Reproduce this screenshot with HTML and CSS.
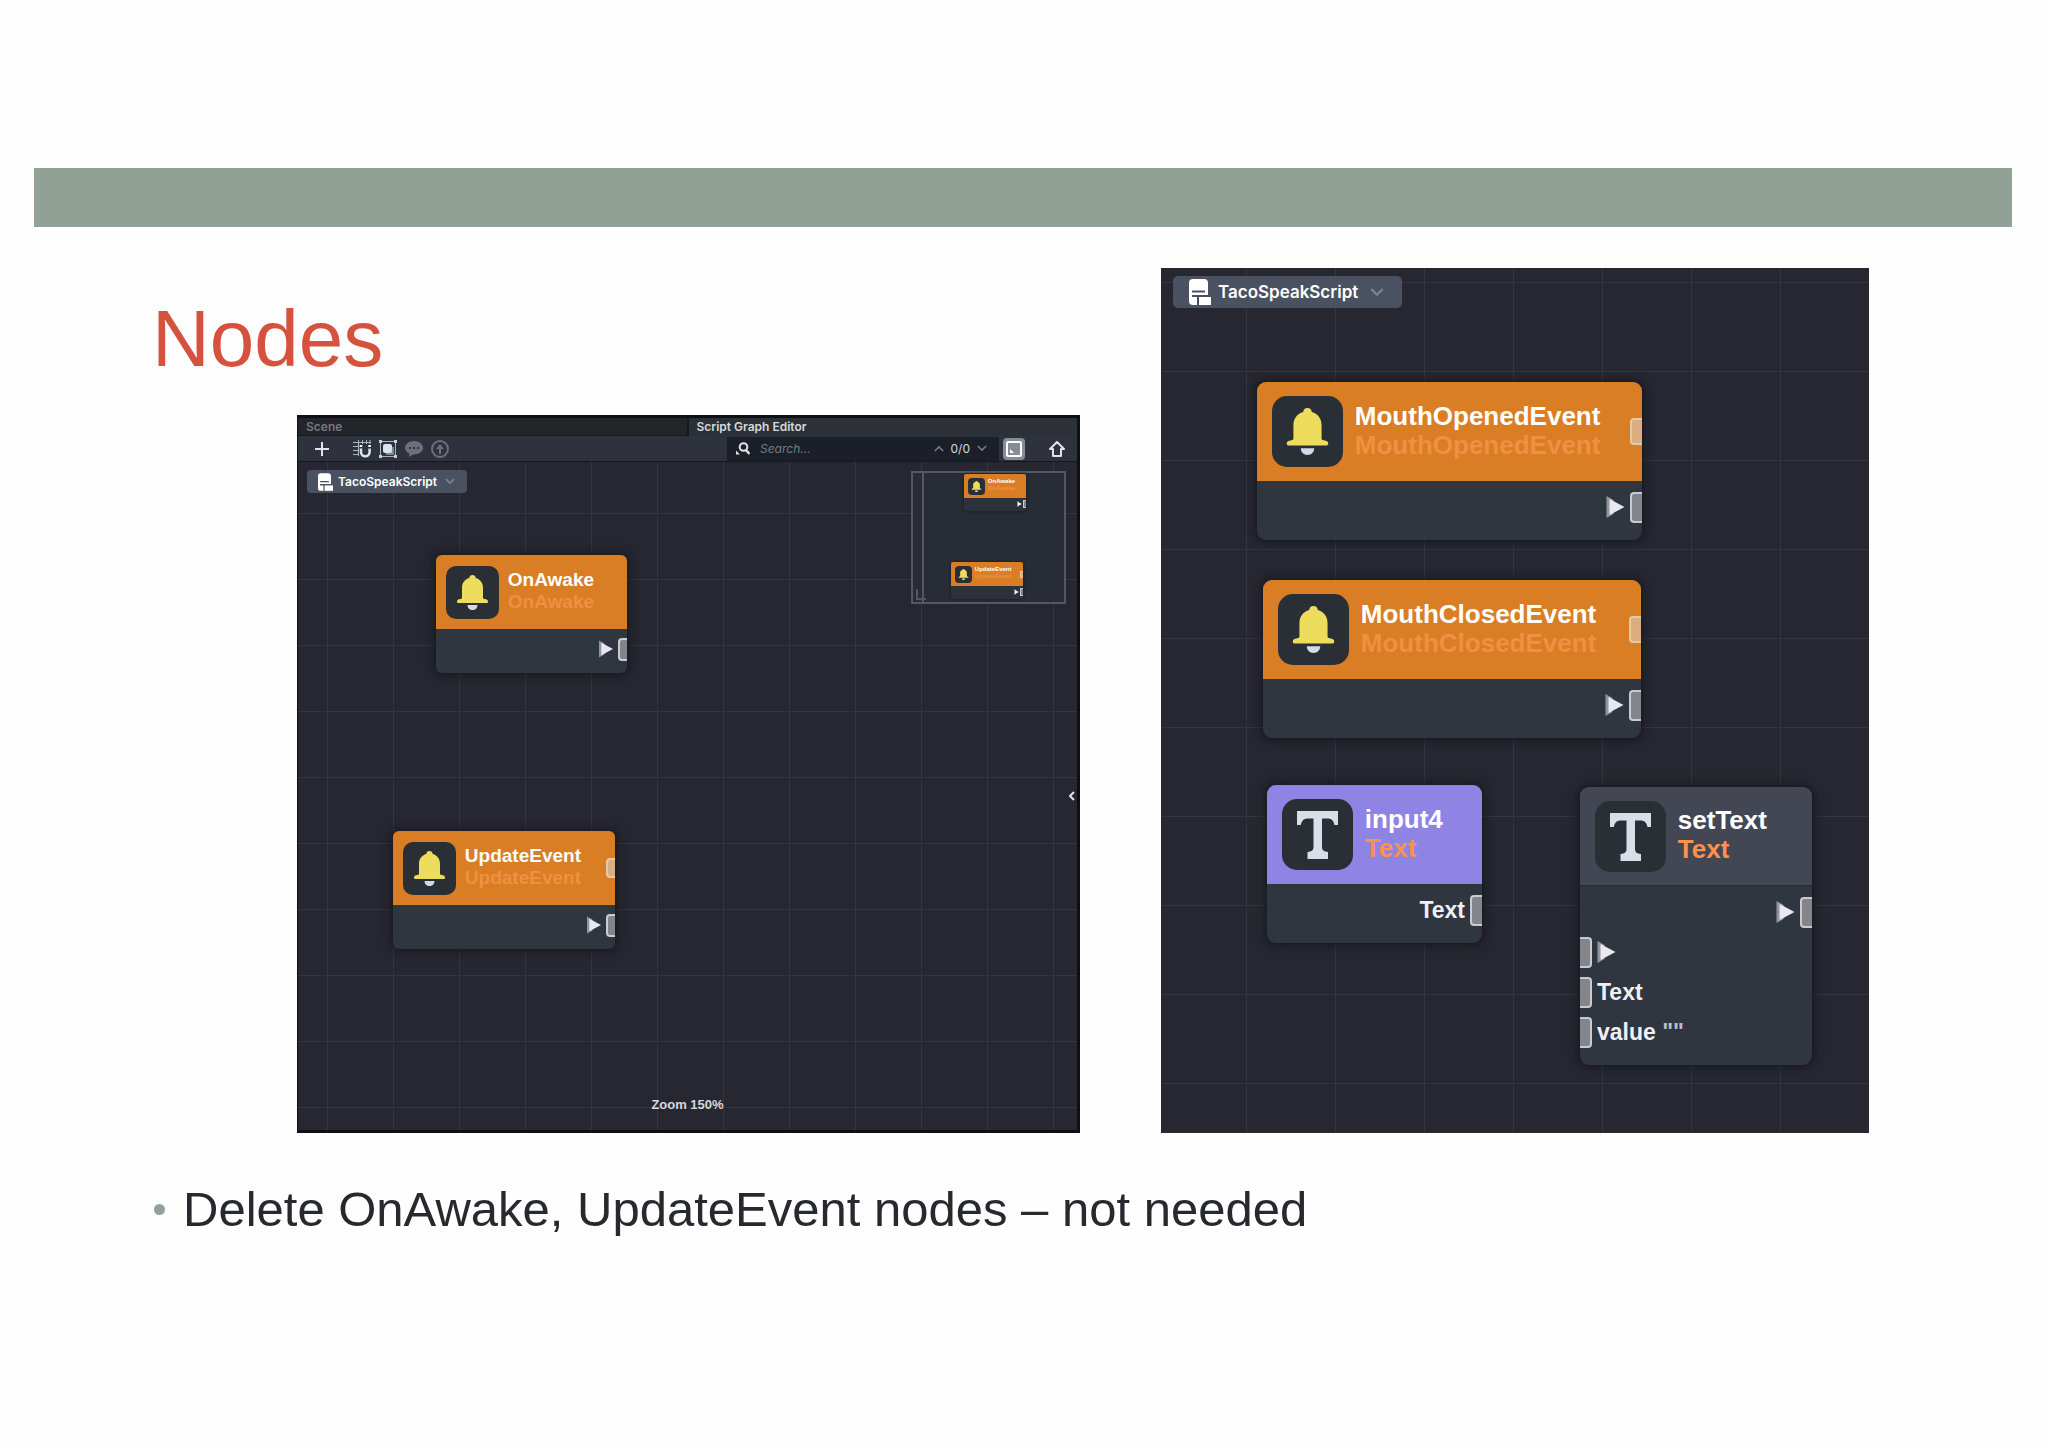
FILE: index.html
```html
<!DOCTYPE html>
<html lang="en">
<head>
<meta charset="utf-8">
<title>Nodes</title>
<link rel="stylesheet" href="styles.css">
</head>
<body>
<svg class="defs" aria-hidden="true">
  <symbol id="bell" viewBox="0 0 53 53">
    <path fill="#eedc5c" d="M26.500 9c2 0 3 1.200 3.200 2.900C34.500 13.200 37 17 37 22v9.500c0 1 .4 1.400 1.600 1.500 2.200.2 3.400 1.200 3.400 2.400 0 .9-.6 1.600-1.600 1.600H12.600c-1 0-1.600-.7-1.600-1.600 0-1.200 1.200-2.200 3.400-2.400 1.200-.1 1.600-.5 1.600-1.500V22c0-5 2.500-8.800 7.300-10.100C23.500 10.200 24.500 9 26.500 9z"/>
    <path fill="#cfdbe6" d="M21.500 39h10c0 3-2.200 5-5 5s-5-2-5-5z"/>
  </symbol>
  <symbol id="tee" viewBox="0 0 71 71">
    <path fill="#d9dfe8" d="M15 12h41v14h-3.500c-1-4.500-3-6.500-7-6.500H40V48c0 3 1.500 4.500 6 5v7H25.500v-7c4.500-.5 6-2 6-5V19.500H26c-4.200 0-6.200 2-7.200 6.500H15z"/>
  </symbol>
  <symbol id="play" viewBox="0 0 18 22">
    <path fill="#92959c" d="M0 0l7 4v14l-7 4z"/><path fill="#e8e8ee" d="M3 3l15 8-15 8z"/>
  </symbol>
  <symbol id="script" viewBox="0 0 22 26">
    <path fill="#fff" d="M4 0h11a4 4 0 0 1 4 4v13h-9v9H4a4 4 0 0 1-4-4V4a4 4 0 0 1 4-4z"/>
    <path stroke="#4a5262" stroke-width="2" d="M3 12.500h13M3 17h17M9 17v9"/>
    <path fill="#fff" d="M10 18h12v8H10z"/>
  </symbol>
  <symbol id="down" viewBox="0 0 12 8"><path fill="none" stroke="currentColor" stroke-width="2" d="M1 1l5 5 5-5"/></symbol>
  <symbol id="up" viewBox="0 0 12 8"><path fill="none" stroke="currentColor" stroke-width="2" d="M1 7l5-5 5 5"/></symbol>
</svg>

<div class="band"></div>
<main class="slide">
  <section class="left">
    <h1>Nodes</h1>
    <div class="editor">
      <div class="tabs">
        <button class="tab">Scene</button>
        <button class="tab tab-active">Script Graph Editor</button>
      </div>
      <div class="toolbar">
        <button class="tool tool-add" aria-label="Add"><svg width="14" height="14" viewBox="0 0 14 14"><path stroke="#e3e5ea" stroke-width="2" d="M7 0v14M0 7h14"/></svg></button>
        <button class="tool" aria-label="Snap"><svg width="18" height="18" viewBox="0 0 18 18"><path fill="none" stroke="#aeb6c1" d="M5.500 0v16M9.500 0v4M13.500 0v4M17 0v4M0 2.500h18M0 6.500h5M0 10.500h5M0 14.500h5"/><path fill="none" stroke="#dfe5ec" stroke-width="2.500" d="M8 8.500v3.500a4.300 4.300 0 0 0 8.600 0V8.500"/><path stroke="#fff" stroke-width="2" d="M6.700 6h2.600M15.300 6h2.600"/></svg></button>
        <button class="tool" aria-label="Frame selection"><svg width="18" height="18" viewBox="0 0 18 18"><rect x="1.500" y="1.500" width="15" height="15" fill="none" stroke="#a9b2be"/><path fill="#7d8794" d="M7 7h8v8H7z"/><rect x="4" y="4" width="9" height="9" rx="2" fill="#dbe3ec"/><path fill="#c7d0da" d="M0 0h3v3H0zM15 0h3v3h-3zM0 15h3v3H0zM15 15h3v3h-3z"/></svg></button>
        <button class="tool" aria-label="Comment"><svg width="18" height="16" viewBox="0 0 18 16"><path fill="#6b7079" d="M9 0c5 0 9 3 9 6.800s-4 6.700-9 6.700H8L4 16l.3-3.500C1.700 11.300 0 9.300 0 6.800 0 3 4 0 9 0z"/><path fill="#2f343e" d="M4 6h2v2H4zM8 6h2v2H8zM12 6h2v2h-2z"/></svg></button>
        <button class="tool" aria-label="Upload"><svg width="18" height="18" viewBox="0 0 18 18"><circle cx="9" cy="9" r="8" fill="none" stroke="#6b7079" stroke-width="2"/><path fill="#6b7079" d="M9 4l4 5h-3v5H8V9H5z"/></svg></button>
        <div class="search">
          <svg width="14" height="13" viewBox="0 0 14 13"><circle cx="7.500" cy="5" r="3.800" fill="none" stroke="#dfe2e8" stroke-width="2"/><path stroke="#dfe2e8" stroke-width="2.500" d="M10 8l3.500 4"/><path fill="#dfe2e8" d="M0 8.500L4 12.500H0z"/></svg>
          <input type="text" placeholder="Search..." aria-label="Search">
          <button class="step" aria-label="Previous"><svg width="10" height="7"><use href="#up"/></svg></button>
          <span class="count">0/0</span>
          <button class="step" aria-label="Next"><svg width="10" height="7"><use href="#down"/></svg></button>
        </div>
        <button class="map-toggle" aria-label="Toggle minimap"><svg width="16" height="16" viewBox="0 0 16 16"><rect x="1" y="1" width="14" height="14" rx="1" fill="#878d97" stroke="#fff" stroke-width="2"/><path fill="#fff" d="M4 8l4 4H4z"/></svg></button>
        <button class="tool home" aria-label="Home"><svg width="16" height="16" viewBox="0 0 16 16"><path fill="none" stroke="#dfe2e8" stroke-width="2" stroke-linejoin="round" d="M1 8l7-7 7 7h-3v7H4V8z"/></svg></button>
      </div>
      <div class="canvas canvas-small">
        <button class="chip"><svg class="chip-icon"><use href="#script"/></svg>TacoSpeakScript<svg class="chip-arrow"><use href="#down"/></svg></button>
        <article class="node event on-awake">
          <header><span class="tile"><svg><use href="#bell"/></svg></span><div><h2>OnAwake</h2><p>OnAwake</p></div></header>
          <div class="row out"><svg class="play"><use href="#play"/></svg><i class="port"></i></div>
        </article>
        <article class="node event update">
          <header><span class="tile"><svg><use href="#bell"/></svg></span><div><h2>UpdateEvent</h2><p>UpdateEvent</p></div><i class="port port-head"></i></header>
          <div class="row out"><svg class="play"><use href="#play"/></svg><i class="port"></i></div>
        </article>
        <div class="minimap">
          <article class="node event mini-awake">
            <header><span class="tile"><svg><use href="#bell"/></svg></span><div><h2>OnAwake</h2><p>OnAwake</p></div></header>
            <div class="row out"><svg class="play"><use href="#play"/></svg><i class="port"></i></div>
          </article>
          <article class="node event mini-update">
            <header><span class="tile"><svg><use href="#bell"/></svg></span><div><h2>UpdateEvent</h2><p>UpdateEvent</p></div><i class="port port-head"></i></header>
            <div class="row out"><svg class="play"><use href="#play"/></svg><i class="port"></i></div>
          </article>
        </div>
        <button class="drawer" aria-label="Open side panel"><svg width="6" height="10" viewBox="0 0 6 10"><path fill="none" stroke="#e3e5ea" stroke-width="2" d="M5 1L1 5l4 4"/></svg></button>
        <p class="zoom">Zoom 150%</p>
      </div>
    </div>
  </section>

  <section class="canvas canvas-large">
    <button class="chip"><svg class="chip-icon"><use href="#script"/></svg>TacoSpeakScript<svg class="chip-arrow"><use href="#down"/></svg></button>
    <article class="node event opened">
      <header><span class="tile"><svg><use href="#bell"/></svg></span><div><h2>MouthOpenedEvent</h2><p>MouthOpenedEvent</p></div><i class="port port-head"></i></header>
      <div class="row out"><svg class="play"><use href="#play"/></svg><i class="port"></i></div>
    </article>
    <article class="node event closed">
      <header><span class="tile"><svg><use href="#bell"/></svg></span><div><h2>MouthClosedEvent</h2><p>MouthClosedEvent</p></div><i class="port port-head"></i></header>
      <div class="row out"><svg class="play"><use href="#play"/></svg><i class="port"></i></div>
    </article>
    <article class="node variable input">
      <header><span class="tile"><svg><use href="#tee"/></svg></span><div><h2>input4</h2><p>Text</p></div></header>
      <div class="row out"><span>Text</span><i class="port"></i></div>
    </article>
    <article class="node action set-text">
      <header><span class="tile"><svg><use href="#tee"/></svg></span><div><h2>setText</h2><p>Text</p></div></header>
      <div class="row out"><svg class="play"><use href="#play"/></svg><i class="port"></i></div>
      <div class="row in"><i class="port"></i><svg class="play"><use href="#play"/></svg></div>
      <div class="row in"><i class="port"></i><span>Text</span></div>
      <div class="row in"><i class="port"></i><span>value <b>""</b></span></div>
    </article>
  </section>
</main>
<ul class="notes">
  <li>Delete OnAwake, UpdateEvent nodes – not needed</li>
</ul>
</body>
</html>
```
FILE: styles.css
```css
* { box-sizing: border-box; }

body {
  margin: 0;
  padding: 168px 36px 0 34px;
  background: #fefefe;
  font-family: "Liberation Sans", Arial, sans-serif;
}

h1, h2, p, ul { margin: 0; }
button { border: 0; padding: 0; background: none; font: inherit; color: inherit; }
svg { display: block; }
.defs { display: none; }

.band { height: 59px; background: #92a196; }

.slide {
  display: grid;
  grid-template-columns: minmax(0, 928fr) minmax(0, 708fr);
  gap: 81px;
  padding: 41px 143px 0 118px;
}

.left { display: flex; flex-direction: column; }
h1 { font-size: 80px; line-height: 92px; font-weight: 400; color: #d5533e; margin: 25px 0 30px; }

/* Editor window */
.editor {
  flex: 1;
  display: flex;
  flex-direction: column;
  margin-left: 145px;
  border: solid #0e1014;
  border-width: 3px 3px 3px 1px;
  background: #2e323d;
  font-family: Inter, sans-serif;
}

.tabs { display: flex; height: 18px; background: #2c3137; font-size: 12px; line-height: 18px; font-weight: 600; }
.tab { flex: 1; padding-left: 8px; text-align: left; color: #757a80; background: #22252a; border: solid #15181d; border-width: 0 2px 1px 0; }
.tab-active { color: #d5d8dd; background: none; border: 0; }

.toolbar { display: flex; align-items: center; gap: 4px; height: 26px; padding: 0 8px 0 17px; border-bottom: 1px solid #15181d; }
.tool { margin-right: 4px; }
.tool-add { margin-right: 20px; }
.home { margin-left: 20px; }
.search { display: flex; align-items: center; width: 272px; height: 24px; margin-left: auto; padding: 0 12px 0 9px; background: #1b1f27; color: #d5d8dd; }
.search input { flex: 1; min-width: 0; margin-left: 10px; padding: 0; border: 0; background: none; outline: 0; font: italic 12px/16px Inter, sans-serif; }
.search input::placeholder { color: #777b83; }
.count { margin: 0 7px; font-size: 12px; }
.step { color: #777b83; }
.map-toggle { padding: 3px; border-radius: 4px; background: #878d97; }

/* Graph canvas */
.canvas {
  position: relative;
  background-color: #272731;
  background-image: linear-gradient(90deg, #33363f 1px, transparent 1px), linear-gradient(#33363f 1px, transparent 1px);
}
.canvas-small {
  flex: 1;
  --text: 19px; --line: 22px; --tile: 53px; --tile-radius: 10px; --pad: 10px; --header: 74px; --node: 118px; --radius: 6px;
  --port-w: 9px; --port-h: 23px; --port-head: 20px; --port-line: 2px; --row: 40px; --row-top: 0px; --play: 18px; --play-w: 14px;
  background-size: 66px 66px;
  background-position: 29px 51px;
}
.canvas-large {
  min-height: 865px;
  --text: 26px; --line: 29px; --tile: 71px; --tile-radius: 15px; --pad: 15px; --header: 99px; --node: 158px; --radius: 9px;
  --port-w: 12px; --port-h: 31px; --port-head: 27px; --port-line: 2px; --row: 40px; --row-top: 6px; --play: 22px; --play-w: 19px;
  background-size: 89px 89px;
  background-position: 85px 14px;
}

.chip {
  display: flex;
  align-items: center;
  width: fit-content;
  background: #4a5262;
  color: #fff;
  font-family: Inter, sans-serif;
  font-weight: 600;
}
.chip-arrow { color: #7d8491; }
.canvas-small .chip { height: 23px; margin: 8px 9px; padding: 0 12px 0 11px; border-radius: 4px; font-size: 12px; }
.canvas-small .chip-icon { width: 15px; height: 18px; margin-right: 5px; }
.canvas-small .chip-arrow { width: 10px; height: 7px; margin-left: 8px; }
.canvas-large .chip { height: 32px; margin: 8px 12px; padding: 0 18px 0 16px; border-radius: 5px; font-size: 17px; }
.canvas-large .chip-icon { width: 22px; height: 26px; margin-right: 7px; }
.canvas-large .chip-arrow { width: 14px; height: 9px; margin-left: 12px; }

/* Nodes */
.node {
  position: absolute;
  min-height: var(--node);
  border-radius: var(--radius);
  overflow: hidden;
  background: #2f363f;
  box-shadow: 0 0 10px 2px #16181f;
  font-family: "Liberation Sans", Arial, sans-serif;
}
.node header { position: relative; display: flex; align-items: center; gap: calc(var(--tile) / 6); height: var(--header); padding-left: var(--pad); }
.node h2, .node p { font-size: var(--text); line-height: var(--line); font-weight: 700; color: #fff; white-space: nowrap; }
.node header div { padding-bottom: 2px; }
.node header p { color: #f9924f; }
.event header { background: #d97e24; }
.event header p { color: #f18f42; }
.variable header { background: #8f83e3; }
.action header { background: #434754; border-bottom: 1px solid #282c35; }
.tile { width: var(--tile); height: var(--tile); border-radius: var(--tile-radius); background: #2a2f36; }
.tile svg { width: 100%; height: 100%; }
.row { display: flex; align-items: center; gap: 5px; height: var(--row); font-size: 23px; font-weight: 700; color: #eef0f5; }
.row b { color: #b9bcc4; }
.out { justify-content: flex-end; margin-top: var(--row-top); }
.play { width: var(--play-w); height: var(--play); }
.port { width: var(--port-w); height: var(--port-h); border: var(--port-line) solid #c9cbd1; border-right: 0; border-radius: 4px 0 0 4px; background: #83858b; }
.in .port { border-right: var(--port-line) solid #c9cbd1; border-left: 0; border-radius: 0 4px 4px 0; }
.port-head { height: var(--port-head); margin-left: auto; background: #dcae7f; border-color: #e5c8a8; }

.on-awake { left: 138px; top: 93px; width: 191px; }
.update { left: 95px; top: 369px; width: 222px; }
.opened { left: 96px; top: 114px; width: 385px; }
.closed { left: 102px; top: 312px; width: 378px; }
.input { left: 106px; top: 517px; width: 215px; }
.set-text { left: 419px; top: 519px; width: 232px; min-height: 278px; }

/* Minimap */
.minimap {
  position: absolute;
  top: 9px;
  right: 11px;
  width: 155px;
  height: 133px;
  border: 2px solid #555862;
  background: linear-gradient(#555862, #555862) 9px 0 / 2px 100% no-repeat #282c35;
  --text: 6px; --line: 7px; --tile: 17px; --tile-radius: 4px; --pad: 4px; --header: 24px; --node: 37px; --radius: 2px;
  --port-w: 3px; --port-h: 8px; --port-head: 7px; --port-line: 1px; --row: 12px; --play: 6px; --play-w: 5px;
}
.minimap::after { content: ""; position: absolute; left: 3px; bottom: 2px; width: 8px; height: 9px; border: solid #555862; border-width: 0 0 2px 2px; }
.minimap .node { box-shadow: 0 0 3px #16181f; background: #2d313a; }
.minimap .row { gap: 1px; }
.minimap .port { border-radius: 1px 0 0 1px; }
.mini-awake { left: 51px; top: 1px; width: 62px; }
.mini-update { left: 38px; top: 89px; width: 72px; }

.drawer { position: absolute; right: 1px; top: 328px; padding: 1px; }
.zoom { position: absolute; left: 0; right: 0; bottom: 17px; text-align: center; font: 700 13px/16px "Liberation Sans", Arial, sans-serif; color: #d5d8dd; }

.notes { padding: 48px 0 0 120px; list-style: none; }
.notes li { display: flex; align-items: center; gap: 18px; font-size: 49px; line-height: 56px; color: #28282f; }
.notes li::before { content: ""; width: 11px; height: 11px; border-radius: 50%; background: #92a196; }
```
